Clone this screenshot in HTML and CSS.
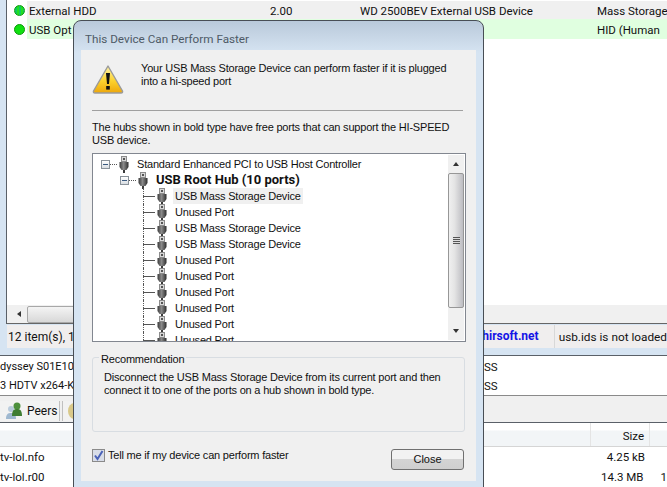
FILE: index.html
```html
<!DOCTYPE html>
<html lang="en">
<head>
    <meta charset="UTF-8">
    <meta name="viewport" content="width=device-width, initial-scale=1.0">
    <title>This Device Can Perform Faster</title>
    <link rel="stylesheet" href="styles.css">
</head>
<body>

<svg class="defs" width="0" height="0">
    <defs>
        <linearGradient id="plug" x1="0" x2="1" y1="0" y2="0">
            <stop offset="0" stop-color="#3c3c3c"/>
            <stop offset="0.45" stop-color="#8a8a8a"/>
            <stop offset="1" stop-color="#2e2e2e"/>
        </linearGradient>
        <linearGradient id="warn" x1="0" x2="0" y1="0" y2="1">
            <stop offset="0" stop-color="#fff3a8"/>
            <stop offset="0.55" stop-color="#fcd22e"/>
            <stop offset="1" stop-color="#eda70c"/>
        </linearGradient>
        <symbol id="usb" viewBox="0 0 14 17">
            <rect x="4.5" y="0.5" width="5" height="5" fill="#d8d8d8" stroke="#8c8c8c"/>
            <rect x="6" y="2" width="2" height="2" fill="#555"/>
            <path d="M2.5 6h9v5l-2 3h-5l-2-3z" fill="url(#plug)"/>
            <rect x="6" y="14" width="2" height="3" fill="#3a3a3a"/>
        </symbol>
    </defs>
</svg>

<div class="top-pane">
    <div class="device-list">
        <div class="device-row">
            <span class="dot dot-hub"></span>
            <div class="device-cells row-grey">
                <span class="cell-name">External HDD</span>
                <span class="cell-ver">2.00</span>
                <span class="cell-desc">WD 2500BEV External USB Device</span>
                <span class="cell-type">Mass Storage</span>
            </div>
        </div>
        <div class="device-row">
            <span class="dot"></span>
            <div class="device-cells row-green">
                <span class="cell-name">USB Opt</span>
                <span class="cell-ver"></span>
                <span class="cell-desc"></span>
                <span class="cell-type">HID (Human</span>
            </div>
        </div>
    </div>
    <div class="hscroll">
        <span class="hscroll-arrow"></span>
        <span class="hscroll-thumb"></span>
    </div>
    <div class="status-bar">
        <span class="status-count">12 item(s), 1</span>
        <span class="status-link">hirsoft.net</span>
        <span class="status-ids">usb.ids is not loaded</span>
    </div>
</div>

<div class="torrents">
    <div class="torrent-row"><span class="torrent-name">dyssey S01E10</span><span>SS</span></div>
    <div class="torrent-row"><span class="torrent-name">3 HDTV x264-K</span><span>SS</span></div>
</div>

<div class="tabs">
    <div class="tab">
        <svg width="18" height="18" viewBox="0 0 18 18">
            <circle cx="6" cy="7" r="3" fill="#b9cbdc"/>
            <path d="M1 17c0-5 2-6 5-6s5 1 5 6z" fill="#9fb8d0"/>
            <circle cx="12" cy="4" r="3.5" fill="#4d8f3c"/>
            <path d="M7 14c0-6 2-7 5-7s5 1 5 7z" fill="#3f7d32"/>
        </svg>
        <span>Peers</span>
    </div>
    <div class="tab tab-next"><span class="tab-coin"></span></div>
</div>

<div class="files">
    <div class="files-head"><span class="col-fill"></span><span class="col-size">Size</span><span class="col-last"></span></div>
    <div class="file-row"><span class="col-fill">tv-lol.nfo</span><span class="col-size">4.25 kB</span><span class="col-last"></span></div>
    <div class="file-row"><span class="col-fill">tv-lol.r00</span><span class="col-size">14.3 MB</span><span class="col-last">1</span></div>
</div>

<div class="dialog">
    <div class="dialog-title">This Device Can Perform Faster</div>
    <div class="dialog-body">
        <div class="intro">
            <svg class="warn-icon" width="32" height="30" viewBox="0 0 32 30">
                <path d="M16 2 L30.5 27 Q31 29 29 29 H3 Q1 29 1.5 27 Z" fill="url(#warn)" stroke="#9a9a9a" stroke-width="1.4" stroke-linejoin="round"/>
                <path d="M14 9h4l-1 11h-2z" fill="#111"/>
                <rect x="14.2" y="22" width="3.6" height="3.6" fill="#111"/>
            </svg>
            <p>Your USB Mass Storage Device can perform faster if it is plugged<br>into a hi-speed port</p>
        </div>
        <div class="sep"></div>
        <p class="hubs-note">The hubs shown in bold type have free ports that can support the HI-SPEED<br>USB device.</p>

        <div class="tree-box">
            <div class="tree">
                <div class="node node-ctrl">
                    <span class="expander"></span><span class="dash"></span>
                    <svg class="usb"><use href="#usb"/></svg>
                    <span class="label">Standard Enhanced PCI to USB Host Controller</span>
                </div>
                <div class="node node-hub">
                    <span class="expander"></span><span class="dash"></span>
                    <svg class="usb"><use href="#usb"/></svg>
                    <span class="label label-bold">USB Root Hub (10 ports)</span>
                </div>
                <div class="node node-port"><span class="branch"></span><svg class="usb"><use href="#usb"/></svg><span class="label label-sel">USB Mass Storage Device</span></div>
                <div class="node node-port"><span class="branch"></span><svg class="usb"><use href="#usb"/></svg><span class="label">Unused Port</span></div>
                <div class="node node-port"><span class="branch"></span><svg class="usb"><use href="#usb"/></svg><span class="label">USB Mass Storage Device</span></div>
                <div class="node node-port"><span class="branch"></span><svg class="usb"><use href="#usb"/></svg><span class="label">USB Mass Storage Device</span></div>
                <div class="node node-port"><span class="branch"></span><svg class="usb"><use href="#usb"/></svg><span class="label">Unused Port</span></div>
                <div class="node node-port"><span class="branch"></span><svg class="usb"><use href="#usb"/></svg><span class="label">Unused Port</span></div>
                <div class="node node-port"><span class="branch"></span><svg class="usb"><use href="#usb"/></svg><span class="label">Unused Port</span></div>
                <div class="node node-port"><span class="branch"></span><svg class="usb"><use href="#usb"/></svg><span class="label">Unused Port</span></div>
                <div class="node node-port"><span class="branch"></span><svg class="usb"><use href="#usb"/></svg><span class="label">Unused Port</span></div>
                <div class="node node-port"><span class="branch"></span><svg class="usb"><use href="#usb"/></svg><span class="label">Unused Port</span></div>
            </div>
            <div class="vscroll">
                <span class="vscroll-btn"><span class="arrow-up"></span></span>
                <span class="vscroll-thumb"><span class="grip"></span></span>
                <span class="vscroll-btn vscroll-btn-down"><span class="arrow-down"></span></span>
            </div>
        </div>

        <div class="group">
            <span class="group-legend">Recommendation</span>
            <p>Disconnect the USB Mass Storage Device from its current port and then<br>connect it to one of the ports on a hub shown in bold type.</p>
        </div>

        <div class="dialog-foot">
            <label class="check">
                <span class="check-box">
                    <svg width="11" height="11" viewBox="0 0 11 11"><path d="M2 5.5 L4.5 9 L9.5 1" fill="none" stroke="#4a62b8" stroke-width="2"/></svg>
                </span>
                Tell me if my device can perform faster
            </label>
            <button class="close-btn">Close</button>
        </div>
    </div>
</div>

</body>
</html>
```

FILE: styles.css
```css
html, body {
    height: 100%;
}

body {
    margin: 0;
    overflow: hidden;
    position: relative;
    background-color: #d6e4f2;
    font-family: Roboto, Arial, sans-serif;
    font-size: 11.5px;
    color: #111;
}

p {
    margin: 0;
}

.defs {
    position: absolute;
}

/* background window */
.top-pane {
    height: 355px;
    box-sizing: border-box;
    padding: 0 0 7px 6px;
    display: flex;
    flex-direction: column;
}

.device-list {
    flex: 1;
    background: white;
    border-left: 1px solid #5a6068;
    padding-top: 1px;
}

.device-row {
    display: flex;
    align-items: center;
    height: 18px;
}

.device-row + .device-row {
    height: 20px;
}

.dot {
    flex: none;
    width: 9px;
    height: 9px;
    margin: 0 2px 0 7px;
    border-radius: 50%;
    border: 1px solid #0a9a0a;
    background: #10e010;
}

.dot-hub {
    background: repeating-linear-gradient(90deg, #10c860 0 2px, #20e020 2px 4px);
}

.device-cells {
    flex: 1;
    height: 100%;
    display: flex;
    align-items: center;
    padding-top: 1px;
    box-sizing: border-box;
}

.row-grey {
    background: #f0f0f0;
}

.row-green {
    background: #e0ffe0;
}

.cell-name {
    width: 243px;
    padding-left: 2px;
    box-sizing: border-box;
}

.cell-ver {
    width: 90px;
}

.cell-desc {
    width: 237px;
}

.cell-type {
    white-space: nowrap;
}

.hscroll {
    height: 18px;
    background: #f0f0f0;
    border-left: 1px solid #5a6068;
    border-bottom: 1px solid #666;
    display: flex;
    align-items: center;
}

.hscroll-arrow {
    width: 0;
    height: 0;
    margin-left: 7px;
    border: 3px solid transparent;
    border-right: 4px solid #333;
}

.hscroll-thumb {
    margin-left: 6px;
    width: 300px;
    height: 15px;
    border: 1px solid #a8a8a8;
    border-radius: 2px;
    background: linear-gradient(#f4f4f4, #d8d8d8);
}

.status-bar {
    height: 23px;
    margin-top: 1px;
    display: flex;
    align-items: center;
    background: #f0eeee;
    border-left: 1px solid #d6e4f2;
    font-size: 12px;
}

.status-count {
    width: 220px;
    padding-left: 1px;
    box-sizing: border-box;
    white-space: nowrap;
}

.status-link {
    width: 328px;
    padding-right: 15px;
    margin-top: -2px;
    box-sizing: border-box;
    text-align: right;
    font-weight: bold;
    color: #1414e6;
}

.status-ids {
    flex: 1;
    height: 100%;
    padding: 1px 0 0 4px;
    box-sizing: border-box;
    border-left: 1px solid #d8d8d8;
    display: flex;
    align-items: center;
    white-space: nowrap;
    font-size: 11.8px;
}

.torrents {
    height: 41px;
    box-sizing: border-box;
    padding-top: 1px;
    background: white;
    border-top: 1px solid #5a6068;
    border-bottom: 1px solid #8a8a8a;
}

.torrent-row {
    display: flex;
    height: 19px;
    align-items: center;
}

.torrent-name {
    width: 484px;
    font-size: 11px;
    white-space: nowrap;
}

.tabs {
    height: 26px;
    background: #f0f0f0;
    border-bottom: 1px solid #5a6068;
    display: flex;
    align-items: flex-end;
    font-size: 12px;
}

.tab {
    height: 20px;
    width: 60px;
    margin-bottom: 1px;
    display: flex;
    align-items: center;
    gap: 4px;
    padding-left: 5px;
    box-sizing: border-box;
    background: #f2f2f2;
    border-right: 1px solid #c0c0c0;
}

.tab-next {
    width: 20px;
    margin-left: 2px;
    border-left: 1px solid #c0c0c0;
}

.tab-coin {
    width: 14px;
    height: 16px;
    border-radius: 50%;
    background: #d9c98a;
}

.files {
    background: white;
    height: 65px;
}

.files-head {
    height: 24px;
    display: flex;
    align-items: center;
    background: linear-gradient(#ffffff 30%, #f2f5f7 35%, #f2f5f7);
    border-bottom: 1px solid #d5d5d5;
    box-sizing: border-box;
}

.file-row {
    display: flex;
    height: 20px;
    align-items: center;
}

.file-row:first-of-type {
    margin-top: 4px;
}

.col-fill {
    width: 590px;
    white-space: nowrap;
}

.col-size {
    width: 60px;
    box-sizing: border-box;
    padding-right: 5px;
    text-align: right;
    white-space: nowrap;
}

.files-head .col-size {
    height: 100%;
    line-height: 26px;
    border-left: 1px solid #e4e4e4;
    border-right: 1px solid #e4e4e4;
}

.col-last {
    padding-left: 12px;
}

/* dialog window */
.dialog {
    position: absolute;
    left: 73px;
    top: 20px;
    width: 411px;
    height: 480px;
    box-sizing: border-box;
    border: 1px solid #484e55;
    border-radius: 8px 8px 0 0;
    background: linear-gradient(#b9c9da, #d6e4f2 32px);
    padding: 0 7px 6px;
}

.dialog-title {
    height: 29px;
    padding: 11px 0 0 4px;
    box-sizing: border-box;
    color: #4e5a66;
    font-size: 11.7px;
}

.dialog-body {
    background: #f0f0f0;
    height: 431px;
    box-sizing: border-box;
    padding: 11px 12px 0 11px;
    font-family: "Liberation Sans", Arial, sans-serif;
    font-size: 11px;
    letter-spacing: -0.2px;
}

.intro {
    display: flex;
    gap: 17px;
    height: 49px;
}

.warn-icon {
    margin-top: 3px;
    flex: none;
}

.intro p {
    line-height: 13px;
    padding-top: 1px;
    white-space: nowrap;
}

.sep {
    height: 1px;
    background: #a0a0a0;
    width: 371px;
}

.hubs-note {
    margin-top: 10px;
    line-height: 13px;
    white-space: nowrap;
}

.tree-box {
    margin-top: 6px;
    width: 374px;
    height: 189px;
    box-sizing: border-box;
    border: 1px solid #828790;
    background: white;
    display: flex;
}

.tree {
    flex: 1;
    overflow: hidden;
    padding-top: 2px;
}

.node {
    height: 16px;
    display: flex;
    align-items: center;
    white-space: nowrap;
}

.node-ctrl {
    padding-left: 8px;
}

.node-hub {
    padding-left: 27px;
}

.node-port {
    padding-left: 50px;
}

.expander {
    width: 7px;
    height: 7px;
    border: 1px solid #8a929a;
    background: linear-gradient(#3a5a80, #3a5a80) center / 5px 1px no-repeat, linear-gradient(#fff, #d8dde2);
}

.dash {
    width: 7px;
    height: 0;
    border-top: 1px dotted #555;
}

.branch {
    width: 11px;
    height: 16px;
    border-left: 1px dotted #555;
    background: radial-gradient(circle, #555 0.5px, transparent 0.6px) 0 center / 2px 1px repeat-x;
}

.usb {
    width: 14px;
    height: 17px;
    flex: none;
}

.label {
    margin-left: 4px;
    padding: 0 2px;
    line-height: 16px;
}

.label-bold {
    font-family: Roboto, Arial, sans-serif;
    font-weight: bold;
    font-size: 13px;
    letter-spacing: 0;
}

.label-sel {
    background: #f0f0f0;
}

.vscroll {
    width: 16px;
    margin: 1px;
    background: #f0f0f0;
    display: flex;
    flex-direction: column;
}

.vscroll-btn {
    height: 18px;
    flex: none;
    display: flex;
    align-items: center;
    justify-content: center;
}

.vscroll-btn-down {
    margin-top: auto;
}

.arrow-up {
    border: 3px solid transparent;
    border-top: 0;
    border-bottom: 4px solid #333;
}

.arrow-down {
    border: 3px solid transparent;
    border-bottom: 0;
    border-top: 4px solid #333;
}

.vscroll-thumb {
    height: 135px;
    box-sizing: border-box;
    border: 1px solid #979797;
    border-radius: 2px;
    background: linear-gradient(90deg, #f0f0f0, #e4e4e4 40%, #bdbdc2);
    display: flex;
    align-items: center;
    justify-content: center;
}

.grip {
    width: 7px;
    height: 7px;
    background: repeating-linear-gradient(#555 0 1px, #ddd 1px 2px);
}

.group {
    position: relative;
    margin-top: 15px;
    width: 373px;
    height: 75px;
    box-sizing: border-box;
    border: 1px solid #d8dde2;
    border-radius: 3px;
    padding: 13px 8px 0 11px;
}

.group p {
    line-height: 13px;
    white-space: nowrap;
}

.group-legend {
    position: absolute;
    left: 6px;
    top: -5px;
    padding: 0 2px;
    background: #f0f0f0;
    line-height: 13px;
}

.dialog-foot {
    margin-top: 17px;
    width: 372px;
    display: flex;
    justify-content: space-between;
    align-items: flex-start;
}

.check {
    display: flex;
    gap: 3px;
    align-items: center;
    line-height: 13px;
}

.check-box {
    width: 11px;
    height: 11px;
    border: 1px solid #8a8a8a;
    background: #d8dde8;
    display: flex;
}

.close-btn {
    width: 73px;
    height: 21px;
    padding: 0 0 2px;
    font: inherit;
    color: #111;
    border: 1px solid #707070;
    border-radius: 3px;
    background: linear-gradient(#f2f2f2 45%, #d4d4d4 50%, #cfcfcf);
}
```
